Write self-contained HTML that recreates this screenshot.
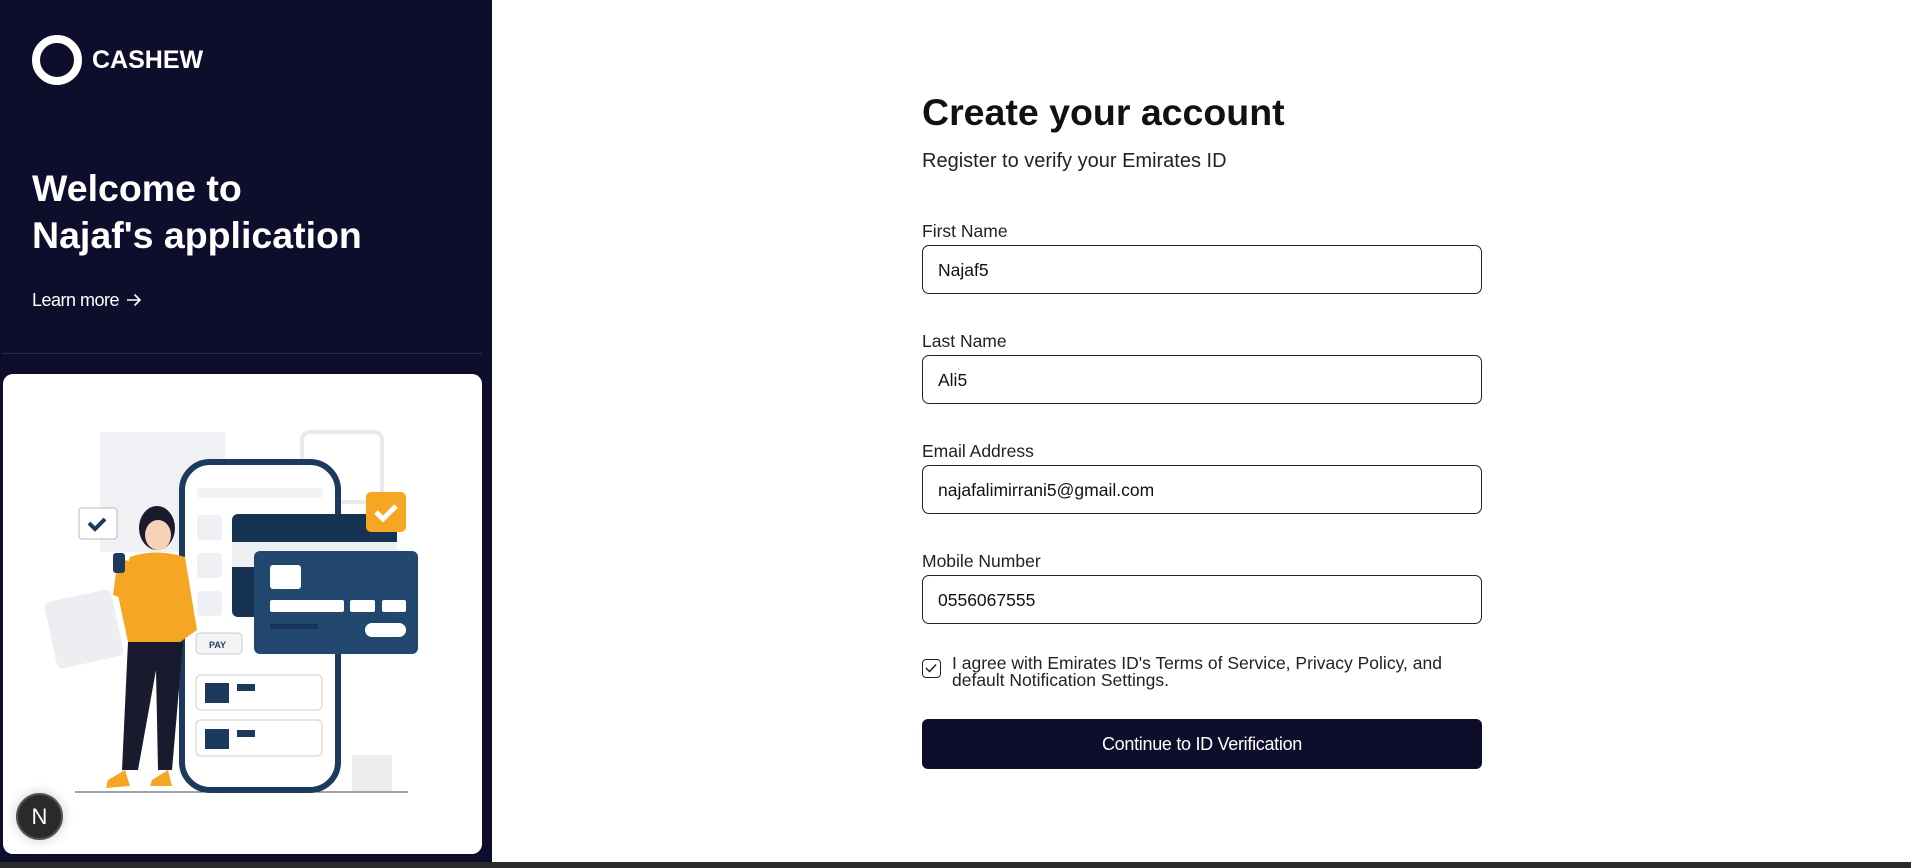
<!DOCTYPE html>
<html><head><meta charset="utf-8"><style>
*{box-sizing:border-box;margin:0;padding:0}
body{width:1911px;height:868px;overflow:hidden;background:#fff;font-family:"Liberation Sans",Arial,sans-serif;position:relative}
.left{position:absolute;left:0;top:0;width:492px;height:862px;background:#0e0e2c}
.logo{position:absolute;left:32px;top:35px;width:50px;height:50px;border:8px solid #fff;border-radius:50%}
.brand{position:absolute;left:92px;top:46px;color:#fff;font-weight:bold;font-size:25px}
.welcome{position:absolute;left:32px;top:165px;color:#fff;font-weight:bold;font-size:37.5px;line-height:47px}
.learn{position:absolute;left:32px;top:290px;color:#fff;font-size:18px;letter-spacing:-0.5px}
.div{position:absolute;left:2px;top:353px;width:480px;height:1px;background:#2a2a48}
.card{position:absolute;left:3px;top:374px;width:479px;height:480px;background:#fff;border-radius:10px;overflow:hidden}
.bar{position:absolute;left:0;top:862px;width:1911px;height:6px;background:#2b2b2b}
.nb{position:absolute;left:16px;top:793px;width:47px;height:47px;border-radius:50%;background:#2a2a2a;border:2px solid #555;color:#fff;font-size:22px;text-align:center;line-height:43px;box-shadow:0 0 12px rgba(0,0,0,.2)}
.form{position:absolute;left:922px;top:0;width:560px}
h1{position:absolute;top:91px;font-size:37.5px;color:#111;white-space:nowrap}
.sub{position:absolute;top:150px;font-size:20px;color:#222;white-space:nowrap}
.lab{position:absolute;font-size:17.5px;color:#222}
.inp{position:absolute;left:0;width:560px;height:49px;border:1px solid #222;border-radius:7px;font-size:17.5px;color:#111;padding:14px 15px}
.chk{position:absolute;top:659px;left:0;width:19px;height:19px;border:1.5px solid #222;border-radius:4px}
.agree{position:absolute;top:655px;left:30px;font-size:17.5px;line-height:17px;color:#222;width:520px}
.btn{position:absolute;top:719px;left:0;width:560px;height:50px;background:#0e0e2c;border-radius:6px;color:#fff;font-size:18px;text-align:center;line-height:50px;letter-spacing:-0.3px}
</style></head><body>
<div class="left">
<div class="logo"></div><div class="brand">CASHEW</div>
<div class="welcome">Welcome to<br>Najaf's application</div>
<div class="learn">Learn more <svg width="16" height="14" viewBox="0 0 16 14" style="vertical-align:-1px;margin-left:2px"><path d="M1 7 H14 M8.5 1.5 L14 7 L8.5 12.5" stroke="#fff" stroke-width="1.6" fill="none"/></svg></div>
<div class="div"></div>
<div class="card">
<svg width="479" height="480" viewBox="3 374 479 480" style="position:absolute;left:0;top:0">
<g transform="translate(0,370)">
<rect x="100" y="62" width="125" height="120" fill="#f0f1f4"/>
<rect x="50" y="225" width="68" height="68" rx="6" fill="#eceef2" transform="rotate(-12 84 259)"/>
<rect x="302" y="62" width="80" height="70" rx="8" fill="none" stroke="#e8eaee" stroke-width="4"/>
<rect x="352" y="385" width="40" height="36" fill="#eceef0"/>
<line x1="75" y1="422" x2="408" y2="422" stroke="#444" stroke-width="1"/>
<rect x="182" y="92" width="156" height="328" rx="28" fill="#fff" stroke="#1c3a5e" stroke-width="6"/>
<rect x="197" y="118" width="126" height="10" rx="4" fill="#f1f2f4"/>
<rect x="197" y="145" width="25" height="25" rx="4" fill="#eef0f3"/>
<rect x="197" y="183" width="25" height="25" rx="4" fill="#eef0f3"/>
<rect x="197" y="221" width="25" height="25" rx="4" fill="#eef0f3"/>
<rect x="232" y="144" width="165" height="103" rx="6" fill="#163354"/>
<rect x="232" y="172" width="165" height="25" fill="#eef0f4"/>
<rect x="254" y="181" width="164" height="103" rx="6" fill="#234870"/>
<rect x="270" y="195" width="31" height="24" rx="3" fill="#fff"/>
<rect x="270" y="230" width="74" height="12" rx="2" fill="#fff"/>
<rect x="350" y="230" width="25" height="12" rx="2" fill="#fff"/>
<rect x="382" y="230" width="24" height="12" rx="2" fill="#fff"/>
<rect x="365" y="253" width="41" height="14" rx="7" fill="#fff"/>
<rect x="270" y="254" width="48" height="5" fill="#18365a"/>
<rect x="366" y="122" width="40" height="40" rx="5" fill="#f5a623"/>
<path d="M376 142 l7 7 l13 -13" stroke="#fff" stroke-width="5" fill="none"/>
<rect x="196" y="263" width="46" height="21" rx="4" fill="#f3f4f6" stroke="#ccc"/>
<text x="209" y="278" font-size="9" font-weight="bold" fill="#1c3a5e" font-family="Liberation Sans">PAY</text>
<rect x="196" y="305" width="126" height="35" rx="5" fill="#fff" stroke="#ddd" stroke-width="1.5"/>
<rect x="205" y="313" width="24" height="20" fill="#1c3a5e"/>
<rect x="237" y="314" width="18" height="7" fill="#1c3a5e"/>
<rect x="196" y="350" width="126" height="36" rx="5" fill="#fff" stroke="#ddd" stroke-width="1.5"/>
<rect x="205" y="359" width="24" height="20" fill="#1c3a5e"/>
<rect x="237" y="360" width="18" height="7" fill="#1c3a5e"/>
<rect x="79" y="138" width="38" height="31" rx="3" fill="#fff" stroke="#bbb"/>
<path d="M89 153 l6 6 l10 -10" stroke="#1c3a5e" stroke-width="4" fill="none"/>
<ellipse cx="157" cy="158" rx="18" ry="22" fill="#1a1a2e"/>
<ellipse cx="158" cy="165" rx="13" ry="15" fill="#f6d3b6"/>
<path d="M130 187 Q155 178 185 187 L197 260 L180 272 L128 272 L118 225 Z" fill="#f5a623"/>
<path d="M113 225 L118 188 L132 192 L127 230 Z" fill="#f5a623"/>
<rect x="113" y="183" width="12" height="20" rx="3" fill="#1c3a5e"/>
<path d="M128 272 L183 272 L172 400 L158 400 L156 300 L138 400 L122 400 Z" fill="#1a1a2e"/>
<path d="M108 410 L125 400 L130 416 L106 418 Z" fill="#f5a623"/>
<path d="M152 410 L168 400 L172 416 L150 416 Z" fill="#f5a623"/>
</g></svg>
</div>
</div>
<div class="nb">N</div>
<div class="form">
<h1>Create your account</h1>
<div class="sub">Register to verify your Emirates ID</div>
<div class="lab" style="top:221px">First Name</div>
<div class="inp" style="top:245px">Najaf5</div>
<div class="lab" style="top:331px">Last Name</div>
<div class="inp" style="top:355px">Ali5</div>
<div class="lab" style="top:441px">Email Address</div>
<div class="inp" style="top:465px">najafalimirrani5@gmail.com</div>
<div class="lab" style="top:551px">Mobile Number</div>
<div class="inp" style="top:575px">0556067555</div>
<div class="chk"><svg width="16" height="16" viewBox="0 0 16 16"><path d="M3 8 l3.5 3.5 l6.5 -7" stroke="#222" stroke-width="1.5" fill="none"/></svg></div>
<div class="agree">I agree with Emirates ID's Terms of Service, Privacy Policy, and default Notification Settings.</div>
<div class="btn">Continue to ID Verification</div>
</div>
<div class="bar"></div>
</body></html>
